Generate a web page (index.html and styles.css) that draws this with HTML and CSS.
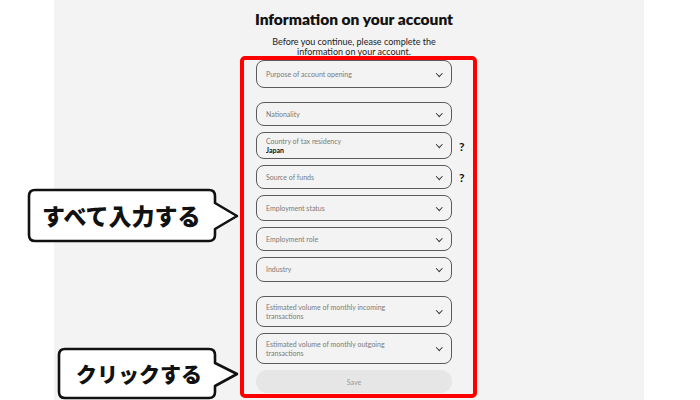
FILE: index.html
```html
<!DOCTYPE html>
<html>
<head>
<meta charset="utf-8">
<link rel="stylesheet" href="styles.css">
</head>
<body>
<div class="page">
  <main class="panel">
    <div class="content">
      <h1 class="title">Information on your account</h1>
      <p class="subtitle">Before you continue, please complete the<br>information on your account.</p>
      <form class="form">
        <div class="row gap-big"><div class="field h28"><span class="label">Purpose of account opening</span><span class="chev"></span></div></div>
        <div class="row"><div class="field h24"><span class="label">Nationality</span><span class="chev"></span></div></div>
        <div class="row"><div class="field h27"><span class="stack"><span class="label">Country of tax residency</span><span class="value">Japan</span></span><span class="chev"></span></div><span class="help">?</span></div>
        <div class="row"><div class="field h24"><span class="label">Source of funds</span><span class="chev"></span></div><span class="help">?</span></div>
        <div class="row"><div class="field h26"><span class="label">Employment status</span><span class="chev"></span></div></div>
        <div class="row"><div class="field h24"><span class="label">Employment role</span><span class="chev"></span></div></div>
        <div class="row gap-big"><div class="field h25"><span class="label">Industry</span><span class="chev"></span></div></div>
        <div class="row"><div class="field h31"><span class="label">Estimated volume of monthly incoming<br>transactions</span><span class="chev"></span></div></div>
        <div class="row"><div class="field h31"><span class="label">Estimated volume of monthly outgoing<br>transactions</span><span class="chev"></span></div></div>
        <div class="row"><div class="save">Save</div></div>
      </form>
    </div>
  </main>
</div>

<div class="highlight"></div>

<div class="callout callout-1">
  <svg class="bubble" width="214" height="57" viewBox="0 0 214 57">
    <path d="M8 2 H182 Q188 2 188 8 V15 L210 28 L188 41 V47 Q188 53 182 53 H8 Q2 53 2 47 V8 Q2 2 8 2 Z" fill="#fff" stroke="#111" stroke-width="2.6" stroke-linejoin="round"/>
  </svg>
  <span class="callout-text">すべて入力する</span>
</div>

<div class="callout callout-2">
  <svg class="bubble" width="184" height="54" viewBox="0 0 184 54">
    <path d="M8 2 H152 Q158 2 158 8 V16 L180 27 L158 39 V45 Q158 51 152 51 H8 Q2 51 2 45 V8 Q2 2 8 2 Z" fill="#fff" stroke="#111" stroke-width="2.6" stroke-linejoin="round"/>
  </svg>
  <span class="callout-text">クリックする</span>
</div>
</body>
</html>
```

FILE: styles.css
```css
html, body {
  margin: 0;
  padding: 0;
  background: #ffffff;
  width: 700px;
  height: 400px;
  overflow: hidden;
}

.page {
  display: flex;
  height: 400px;
  font-family: "Lato", "Liberation Sans", sans-serif;
}

.panel {
  margin-left: 54px;
  width: 590px;
  height: 400px;
  background: #f3f3f3;
}

.content {
  display: flex;
  flex-direction: column;
  align-items: center;
  width: 410px;
  margin-left: 95px;
}

.title {
  margin: 9px 0 0;
  font-size: 15.5px;
  font-weight: 800;
  color: #111;
  letter-spacing: 0px;
  line-height: 20px;
}

.subtitle {
  margin: 8px 0 0;
  font-size: 9px;
  line-height: 10px;
  color: #222;
  text-align: center;
}

.form {
  margin-top: 3px;
  display: flex;
  flex-direction: column;
  gap: 6px;
  width: 196px;
  align-self: flex-start;
  margin-left: 107px;
}

.row {
  position: relative;
  display: flex;
}

.row.gap-big {
  margin-bottom: 8px;
}

.field {
  box-sizing: border-box;
  width: 196px;
  border: 1px solid #5a5a5a;
  border-radius: 8px;
  display: flex;
  align-items: center;
  justify-content: space-between;
  padding: 0 9px 0 9px;
}

.h24 { height: 24px; }
.h25 { height: 25px; }
.h26 { height: 26px; }
.h27 { height: 27px; }
.h28 { height: 28px; }
.h31 { height: 31px; }

.label {
  font-size: 7px;
  line-height: 8.5px;
  color: #7a7a7a;
}

.stack {
  display: flex;
  flex-direction: column;
  gap: 1px;
}

.value {
  font-size: 7px;
  line-height: 8px;
  color: #111;
  font-weight: 700;
}

.chev {
  width: 3.5px;
  height: 3.5px;
  border-right: 1.1px solid #333;
  border-bottom: 1.1px solid #333;
  transform: rotate(45deg);
  margin-top: -2px;
  margin-right: 1px;
  flex: none;
}

.help {
  position: absolute;
  left: 203px;
  top: 50%;
  transform: translateY(-50%);
  font-size: 12px;
  font-weight: 700;
  color: #111;
}

.save {
  box-sizing: border-box;
  width: 196px;
  height: 23px;
  border-radius: 12px;
  background: #e6e6e6;
  color: #999;
  font-size: 7px;
  display: flex;
  align-items: center;
  justify-content: center;
}

.highlight {
  position: absolute;
  left: 240px;
  top: 56px;
  width: 229px;
  height: 334px;
  border: 4px solid #ff0000;
  border-radius: 5px;
}

.callout {
  position: absolute;
  display: flex;
  align-items: center;
}

.bubble {
  position: absolute;
  left: 0;
  top: 0;
}

.callout-text {
  position: relative;
  font-family: "Noto Sans CJK JP", sans-serif;
  font-weight: 900;
  color: #111;
  white-space: nowrap;
}

.callout-1 {
  left: 27px;
  top: 188px;
  width: 214px;
  height: 57px;
}

.callout-1 .callout-text {
  font-size: 23px;
  margin-left: 15px;
  margin-top: -3px;
  letter-spacing: 0px;
}

.callout-2 {
  left: 57px;
  top: 347px;
  width: 184px;
  height: 54px;
}

.callout-2 .callout-text {
  font-size: 21px;
  margin-left: 19px;
  margin-top: -3px;
  letter-spacing: 0px;
}
```
